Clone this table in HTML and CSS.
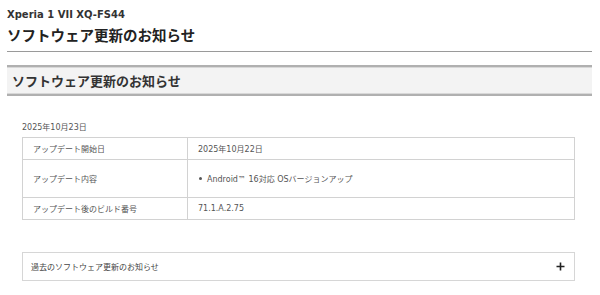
FILE: index.html
```html
<!DOCTYPE html>
<html lang="ja">
<head>
<meta charset="utf-8">
<link rel="stylesheet" href="styles.css">
</head>
<body>
<div class="page">
  <div class="model">Xperia 1 VII XQ-FS44</div>
  <h1 class="title">ソフトウェア更新のお知らせ</h1>
  <div class="rule"></div>
  <h2 class="section">ソフトウェア更新のお知らせ</h2>
  <div class="content">
    <p class="date">2025年10月23日</p>
    <table class="info">
      <tr class="r1">
        <th>アップデート開始日</th>
        <td>2025年10月22日</td>
      </tr>
      <tr class="r2">
        <th>アップデート内容</th>
        <td><ul class="list"><li>Android™ 16対応 OSバージョンアップ</li></ul></td>
      </tr>
      <tr class="r3">
        <th>アップデート後のビルド番号</th>
        <td>71.1.A.2.75</td>
      </tr>
    </table>
    <div class="accordion">
      <span>過去のソフトウェア更新のお知らせ</span>
      <svg class="plus" width="9" height="9" viewBox="0 0 9 9"><path d="M4.5 0.5v8M0.5 4.5h8" stroke="#222" stroke-width="1.6" fill="none"/></svg>
    </div>
  </div>
</div>
</body>
</html>
```
FILE: styles.css
```css
html, body {
  margin: 0;
  padding: 0;
  background: #fff;
}
body {
  font-family: "DejaVu Sans", "Noto Sans CJK JP", sans-serif;
  color: #333;
}
.page {
  padding: 8px 8px 0 7px;
}
.model {
  font-size: 10px;
  font-weight: bold;
  line-height: 14px;
  color: #333;
}
.title {
  margin: 3px 0 0;
  font-size: 14.5px;
  font-weight: bold;
  line-height: 20px;
  color: #222;
  font-family: "Noto Sans CJK JP", sans-serif;
}
.rule {
  margin-top: 6px;
  height: 0;
  border-top: 1px solid #9a9a9a;
}
.section {
  margin: 13px 0 0;
  height: 27px;
  padding: 0 0 0 5px;
  background: #f3f3f3;
  border-top: 2px solid #b0b0b0;
  border-bottom: 2px solid #b0b0b0;
  box-shadow: inset 0 1px 0 #d8d8d8, inset 0 -1px 0 #d8d8d8;
  font-family: "Noto Sans CJK JP", sans-serif;
  font-size: 13px;
  font-weight: bold;
  line-height: 27px;
  color: #333;
}
.content {
  padding: 0 17px 0 15px;
}
.date {
  margin: 26px 0 0;
  font-size: 8px;
  line-height: 12px;
  color: #555;
}
.info {
  margin-top: 3px;
  width: 100%;
  border-collapse: collapse;
  font-size: 8px;
  color: #555;
}
.info th, .info td {
  border: 1px solid #d2d2d2;
  padding: 0 10px;
  text-align: left;
  font-weight: normal;
  vertical-align: middle;
}
.info th {
  width: 144px;
}
.r1 th, .r1 td, .r3 th, .r3 td {
  height: 21px;
}
.r2 th, .r2 td {
  height: 37px;
}
.list {
  margin: 0;
  padding: 0;
  list-style: none;
}
.list li {
  position: relative;
  padding-left: 9px;
}
.list li::before {
  content: "";
  position: absolute;
  left: 1px;
  top: 50%;
  margin-top: -1.5px;
  width: 3px;
  height: 3px;
  border-radius: 50%;
  background: #555;
}
.accordion {
  margin-top: 32px;
  height: 27px;
  border: 1px solid #d6d6d6;
  display: flex;
  align-items: center;
  justify-content: space-between;
  padding: 0 9px 0 8px;
  font-size: 8px;
  color: #444;
}
.plus {
  display: block;
}
```
